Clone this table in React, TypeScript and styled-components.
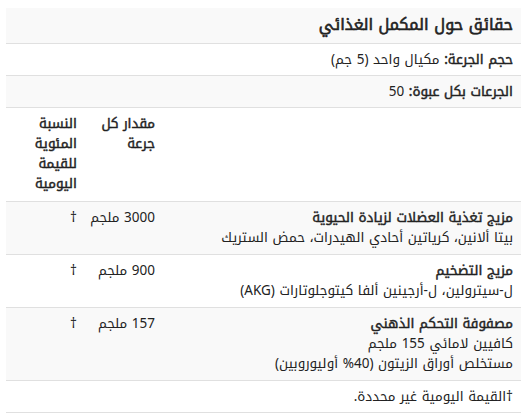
import React from 'react'
import styled, { createGlobalStyle } from 'styled-components'

const GlobalStyle = createGlobalStyle`
  body {
    margin: 8px 11px 0 6px;
    background: #fff;
    font-family: "Noto Kufi Arabic", "Noto Sans", sans-serif;
    color: #222;
  }
`

const Panel = styled.div`
  direction: rtl;
  font-size: 13.5px;
  line-height: 20px;
`

const Row = styled.div<{ $shade?: boolean }>`
  background: ${p => (p.$shade ? '#f9f9f9' : '#fff')};
  border-bottom: 1px solid #e0e0e0;
  padding: 6px 8px 5px;
`

const Title = styled(Row)`
  font-size: 16px;
  line-height: 24px;
  -webkit-text-stroke: 0.6px currentColor;
  padding: 5px 8px 6px;
`

const Label = styled.span`
  -webkit-text-stroke: 0.45px currentColor;
`

const Grid = styled.div<{ $shade?: boolean }>`
  display: grid;
  grid-template-columns: 1fr 78px 79px;
  background: ${p => (p.$shade ? '#f9f9f9' : '#fff')};
  border-bottom: 1px solid #e0e0e0;
`

const Cell = styled.div<{ $bold?: boolean }>`
  padding: 6px 8px 6px;
  -webkit-text-stroke: ${p => (p.$bold ? '0.45px currentColor' : '0')};
`

const HeadCell = styled(Cell)`
  padding-bottom: 7px;
`

const Amount = styled(Cell)`
  white-space: nowrap;
`

const Name = styled.div`
  -webkit-text-stroke: 0.45px currentColor;
`

const items = [
  {
    name: 'مزيج تغذية العضلات لزيادة الحيوية',
    lines: ['بيتا ألانين، كرياتين أحادي الهيدرات، حمض الستريك'],
    amount: '3000 ملجم',
  },
  {
    name: 'مزيج التضخيم',
    lines: ['ل-سيترولين، ل-أرجينين ألفا كيتوجلوتارات (AKG)'],
    amount: '900 ملجم',
  },
  {
    name: 'مصفوفة التحكم الذهني',
    lines: ['كافيين لامائي 155 ملجم', 'مستخلص أوراق الزيتون (40% أوليوروبين)'],
    amount: '157 ملجم',
  },
]

const App = () => {
  return (
    <Panel>
      <GlobalStyle />
      <Title $shade>حقائق حول المكمل الغذائي</Title>
      <Row>
        <Label>حجم الجرعة:</Label> مكيال واحد (5 جم)
      </Row>
      <Row $shade>
        <Label>الجرعات بكل عبوة:</Label> 50
      </Row>
      <Grid>
        <HeadCell />
        <HeadCell $bold>مقدار كل جرعة</HeadCell>
        <HeadCell $bold>النسبة المئوية للقيمة اليومية</HeadCell>
      </Grid>
      {items.map((it, i) => (
        <Grid key={it.name} $shade={i % 2 === 0}>
          <Cell>
            <Name>{it.name}</Name>
            {it.lines.map(l => (
              <div key={l}>{l}</div>
            ))}
          </Cell>
          <Amount>{it.amount}</Amount>
          <Cell>†</Cell>
        </Grid>
      ))}
      <Row>†القيمة اليومية غير محددة.</Row>
    </Panel>
  )
}

export default App
